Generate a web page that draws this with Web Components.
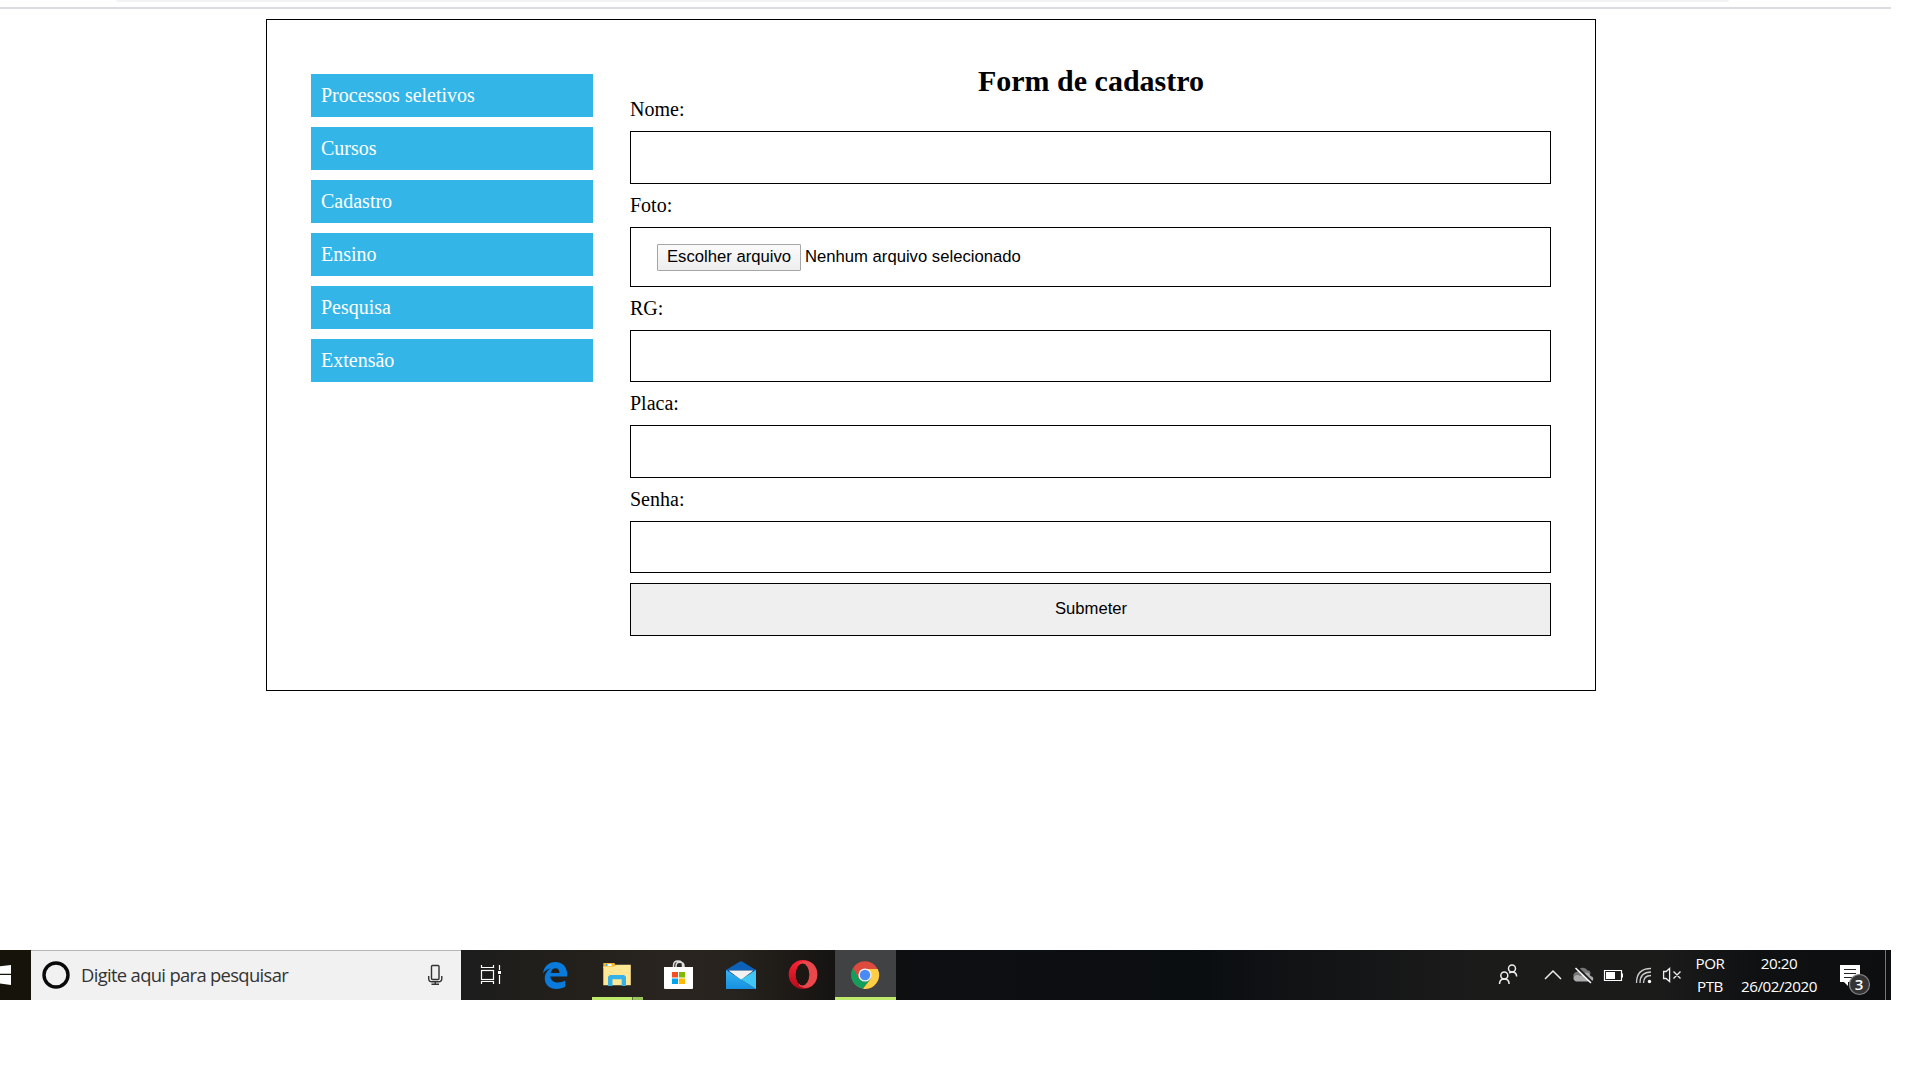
<!DOCTYPE html>
<html lang="pt-BR">
<head>
<meta charset="utf-8">
<title>Form de cadastro</title>
<style>
html,body{margin:0;height:1080px;overflow:hidden;background:#fff}
body{font-family:"Liberation Serif",serif;font-size:20px;color:#000}
</style>
</head>
<body>
<app-screen>
  <browser-edge slot="top"></browser-edge>
  <page-card>
    <side-menu slot="menu">
      <menu-item>Processos seletivos</menu-item>
      <menu-item>Cursos</menu-item>
      <menu-item>Cadastro</menu-item>
      <menu-item>Ensino</menu-item>
      <menu-item>Pesquisa</menu-item>
      <menu-item>Extensão</menu-item>
    </side-menu>
    <cadastro-form heading="Form de cadastro">
      <form-field label="Nome:" style="--h:53px"></form-field>
      <form-field label="Foto:" style="--h:60px"><file-picker label="Escolher arquivo">Nenhum arquivo selecionado</file-picker></form-field>
      <form-field label="RG:" style="--h:52px"></form-field>
      <form-field label="Placa:" style="--h:53px"></form-field>
      <form-field label="Senha:" style="--h:52px"></form-field>
      <submit-button>Submeter</submit-button>
    </cadastro-form>
  </page-card>
  <task-bar slot="bottom"></task-bar>
</app-screen>
<script>
const define = (name, html) => customElements.define(name, class extends HTMLElement {
  constructor() {
    super();
    this.attachShadow({mode: 'open'}).innerHTML = typeof html === 'function' ? html(this) : html;
  }
});

define('app-screen', `<style>
:host{display:flex;flex-direction:column;width:1891px;height:1000px}
main{flex:1;padding:10px 0 0 266px}
</style><slot name="top"></slot><main><slot></slot></main><slot name="bottom"></slot>`);

define('browser-edge', `<style>
:host{display:block;height:9px;box-sizing:border-box;border-bottom:2px solid #dbdbe1}
div{height:2px;margin:0 162px 0 116px;background:#f2f2f3;border-radius:0 0 5px 5px / 0 0 2px 2px}
</style><div></div>`);

define('page-card', `<style>
:host{display:flex;box-sizing:border-box;width:1330px;height:672px;border:1px solid #000;padding:44px 44px 0;gap:37px}
</style><slot name="menu"></slot><slot></slot>`);

define('side-menu', `<style>
:host{display:flex;flex-direction:column;width:282px;gap:10px;padding-top:10px}
</style><slot></slot>`);

define('menu-item', `<style>
:host{display:block;box-sizing:border-box;height:43px;padding:10px;line-height:23px;background:#34b5e7;color:#fff}
</style><slot></slot>`);

define('cadastro-form', el => `<style>
:host{display:block;width:921px}
h2{margin:0;height:34px;line-height:34px;font-size:30px;text-align:center;text-indent:1px}
</style><h2>${el.getAttribute('heading')}</h2><slot></slot>`);

define('form-field', el => `<style>
:host{display:block}
label{display:block;height:23px;line-height:23px;padding:0 0 10px}
div{box-sizing:border-box;height:var(--h);border:1px solid #000;display:flex;align-items:center;padding:0 26px;margin-bottom:10px}
</style><label>${el.getAttribute('label')}</label><div><slot></slot></div>`);

define('file-picker', el => `<style>
:host{display:flex;align-items:center;gap:4px;font:16.67px/19px "Liberation Sans",sans-serif;white-space:nowrap}
button{box-sizing:border-box;width:144px;height:27px;padding:0 0 2px;font:inherit;color:#000;border:1px solid #a6a6a6;border-radius:1px;background:linear-gradient(#fafafa,#eee)}
span{padding-bottom:2px}
</style><button>${el.getAttribute('label')}</button><span><slot></slot></span>`);

define('submit-button', `<style>
:host{display:block}
button{box-sizing:border-box;display:block;width:100%;height:53px;padding:0 0 2px 1px;border:1px solid #000;border-radius:0;background:#efefef;font:16.67px "Liberation Sans",sans-serif;color:#000}
</style><button><slot></slot></button>`);

/* Glyphs are drawn in screen coordinates; each cell's viewBox selects its own span of the bar. */
const glyphs = {
  start: `<path fill="#fff" d="M0 966.3L11 965v8.7H0zM0 975h11v10L0 983.6z"/>`,
  ring: `<circle cx="56" cy="975" r="12" fill="none" stroke="#0a0a0a" stroke-width="3.4"/>`,
  mic: `<g fill="none" stroke="#333" stroke-width="1.4"><rect x="431.5" y="965.5" width="7.5" height="14" rx="1"/><path d="M428.7 976v2.5q0 3.3 3.3 3.3h6.500q3.300 0 3.300-3.300V976M435.300 982v2.300M431.500 984.300h7.500"/></g>`,
  taskview: `<g fill="none" stroke="#fff" stroke-width="1.200"><rect x="481.500" y="970.500" width="12" height="9"/><path d="M481.500 965v2.500h12V965M481.500 984v-2.500h12v2.500M499.500 965v5M499.500 975v9"/></g><path fill="#fff" d="M498 971h3v3h-3z"/>`,
  edge: `<path fill="#0a7bdb" d="M543 973.600C544 966 549 962 555.300 962c7.500 0 11.900 5.500 11.900 12v2.500h-16.800c.2 4 3.600 6 7.600 6 2.900 0 5.200-.7 7.200-2v6.200c-2.400 1.400-5.400 2.200-8.700 2.200-7 0-11.700-4.200-11.700-10.500 0-4.500 2.300-8 6.300-10.100-4 .7-6.600 2.700-8.100 5.300zM550.700 973h8.800c0-3-1.400-4.700-4-4.700-2.500 0-4.300 1.700-4.800 4.700z"/>`,
  explorer: `<path fill="#f2b632" d="M603.300 963h11l2.200 3-2 2h-11.200z"/><path fill="#ffe796" d="M603.300 966.500h10.700l2.300-1.700h14.500v20.400h-27.500z"/><path fill="#fff" d="M605.500 964h6v2h-6z"/><path fill="#3aa7df" d="M605.500 964h2v2h-2z"/><path fill="#35b1e8" d="M608 986v-9.300l2-1.700h14l2 1.700v9.300h-4.300v-6.700h-9.200v6.700z"/><path fill="#bdea6b" d="M592 997h40v3h-40z"/><path fill="#9cc55c" d="M632.500 997H643v3h-10.500z"/>`,
  store: `<path fill="none" stroke="#ddd" stroke-width="1.500" d="M673.500 968v-2.500c0-3 2-4.500 4.500-4.500s4.500 1.500 4.500 4.500v2.500M676 968v-2c0-2.700 1.500-3.700 3.500-3.700s4.500 1 4.500 3.700v2"/><path fill="#fff" d="M664 967h29v21q0 1-1 1h-27q-1 0-1-1z"/><path fill="#f25022" d="M672 972h6v5.500h-6z"/><path fill="#7fba00" d="M679 972h6v5.500h-6z"/><path fill="#00a4ef" d="M672 978.500h6v5.500h-6z"/><path fill="#ffb900" d="M679 978.500h6v5.500h-6z"/>`,
  mail: `<linearGradient id="m" x1="0" y1="0" x2="0" y2="1"><stop stop-color="#35b4f1"/><stop offset="1" stop-color="#1690e0"/></linearGradient><path fill="#0c62b8" d="M726 970l14-8.500q1-.6 2 0l14 8.500v3h-30z"/><path fill="#123f7d" d="M728 970h26v2h-26z"/><path fill="#f2f2f2" d="M728.500 970.500h25L741 980z"/><path fill="url(#m)" d="M726 970l15 9.500 15 9.500h-30z"/><path fill="#41c7f6" d="M756 970v19l-15-9.500z"/>`,
  opera: `<linearGradient id="o" x1="0" y1="0" x2="0" y2="1"><stop stop-color="#ff2537"/><stop offset="1" stop-color="#b00b18"/></linearGradient><ellipse cx="803" cy="974.500" rx="14.300" ry="14.500" fill="url(#o)"/><path fill="#e8474b" d="M799 963.500c7-6 18.300-.5 18.300 11s-11.300 17-18.300 11z"/><ellipse cx="802.500" cy="974.500" rx="6.800" ry="11" fill="#1d1714"/>`,
  chrome: `<circle cx="865" cy="975" r="13.800" fill="#dd4b3e"/><path fill="#139e5c" d="M853.050 968.100A13.800 13.800 0 0 0 863 988.650L871 978.500 859 978.500z"/><path fill="#ffce44" d="M877.700 969A13.800 13.800 0 0 1 863 988.650L871.100 978.500 865 969z"/><circle cx="865" cy="975" r="6.600" fill="#f1f1f1"/><circle cx="865" cy="975" r="5.200" fill="#4a8af4"/><path fill="#bdea6b" d="M835 997h61v3h-61z"/>`,
  people: `<g fill="none" stroke="#eee" stroke-width="1.500"><circle cx="1504.300" cy="975.500" r="3.500"/><path d="M1499.500 984q0-5 4.800-5t4.800 5"/><circle cx="1512" cy="968.500" r="3.500"/><path d="M1509.300 973.300q1-1.300 2.700-1.300 4.500 0 4.700 4.500"/></g>`,
  chevron: `<path fill="none" stroke="#eee" stroke-width="1.500" d="M1545 979l8-8 8 8"/>`,
  cloud: `<path fill="#777" d="M1576 979c-4-1-3.500-7 1-7 1-4.500 8-6 10.500-1.500 3 0 3 2 3 3.500l-6 5z"/><path fill="#aaa" d="M1576 981.500c-4-1.500-3-6.500 1.500-6.500l3.500 1 5-3.500c3.500 0 4.500 3.500 4.500 3.500 4 .5 3.500 5.500 0 5.500z"/><path stroke="#1b1b1b" stroke-width="2" d="M1577 967l15.500 15.500"/><path stroke="#fff" stroke-width="1.500" d="M1575.500 968l15.500 15"/>`,
  battery: `<path fill="none" stroke="#fff" stroke-width="1.200" d="M1604.500 970.500h17v10h-17z"/><path fill="#fff" d="M1606 972h9v7h-9zM1622 973.500h1v4h-1z"/>`,
  wifi: `<g fill="none" stroke="#ccc" stroke-width="1.300"><path d="M1636.500 983q0-14.500 14.500-14.500"/><path d="M1640 983q0-11 11-11"/><path d="M1643.500 983q0-7.500 7.500-7.500"/></g><circle cx="1649.500" cy="981.500" r="1.700" fill="#fff"/>`,
  sound: `<path fill="none" stroke="#eee" stroke-width="1.300" d="M1663.600 971.500h2.500l3.500-3v13l-3.500-3h-2.500zM1673.500 971.500l7 7M1680.500 971.500l-7 7"/>`,
  notice: `<path fill="#fff" d="M1840 965h20v17h-12v4l-4-4h-4z"/><path stroke="#222" stroke-width="1.200" d="M1844 969.500h12M1844 973.500h12M1844 977.500h9"/><circle cx="1859.500" cy="984.500" r="10" fill="#343434" stroke="#858585" stroke-width="1.200"/>`
};
define('task-icon', el => {
  const x = +el.getAttribute('x'), w = +el.getAttribute('w');
  return `<style>:host{display:block;flex:none;width:${w}px;height:50px;position:relative}svg{display:block}
  ::slotted(b){position:absolute;left:23px;top:23px;width:20px;text-align:center;font:600 15px/22px "Open Sans",sans-serif;color:#fff}</style>
  <svg width="${w}" height="50" viewBox="${x} 950 ${w} 50">${glyphs[el.getAttribute('name')]}</svg><slot></slot>`;
});

define('search-box', `<style>
:host{display:flex;box-sizing:border-box;width:430px;height:50px;background:#f1f1f1;box-shadow:inset 0 1px #b5b5b5;font:18.4px/50px "Open Sans",sans-serif;color:#333}
span{flex:1;white-space:nowrap;letter-spacing:-.67px}
</style><task-icon name="ring" x="31" w="50"></task-icon><span><slot></slot></span><task-icon name="mic" x="421" w="40"></task-icon>`);

define('tray-text', `<style>
:host{display:block;box-sizing:border-box;height:50px;padding:2px 1px 0 0;font:15.2px/22.500px "Open Sans",sans-serif;color:#fff;text-align:center;white-space:nowrap;letter-spacing:-.45px}
</style><slot></slot>`);

define('task-bar', `<style>
:host{display:flex;height:50px;box-sizing:border-box;background:linear-gradient(90deg,#16130b 0,#16130b 31px,#1b1c1c 461px,#211f1b 540px,#29241f 680px,#26221d 740px,#161412 830px,#0d0f11 900px,#0b0e11 1200px,#1b1b1a 1480px,#1b1b1a 1660px,#0e1012 1760px,#0d0e10 100%)}
.active{background:#414243}
.gap{flex:1}
.desk{width:5px;border-left:1px solid #777}
</style>
<task-icon name="start" x="0" w="31"></task-icon>
<search-box>Digite aqui para pesquisar</search-box>
<task-icon name="taskview" x="461" w="63"></task-icon>
<task-icon name="edge" x="524" w="62"></task-icon>
<task-icon name="explorer" x="586" w="62"></task-icon>
<task-icon name="store" x="648" w="62"></task-icon>
<task-icon name="mail" x="710" w="62"></task-icon>
<task-icon name="opera" x="772" w="63"></task-icon>
<task-icon class="active" name="chrome" x="835" w="61"></task-icon>
<div class="gap"></div>
<task-icon name="people" x="1490" w="45"></task-icon>
<task-icon name="chevron" x="1535" w="32"></task-icon>
<task-icon name="cloud" x="1567" w="32"></task-icon>
<task-icon name="battery" x="1599" w="31"></task-icon>
<task-icon name="wifi" x="1630" w="28"></task-icon>
<task-icon name="sound" x="1658" w="30"></task-icon>
<tray-text style="width:45px">POR<br>PTB</tray-text>
<tray-text style="width:93px">20:20<br>26/02/2020</tray-text>
<task-icon name="notice" x="1826" w="59"><b>3</b></task-icon>
<div class="desk"></div>`);
</script>
</body>
</html>
